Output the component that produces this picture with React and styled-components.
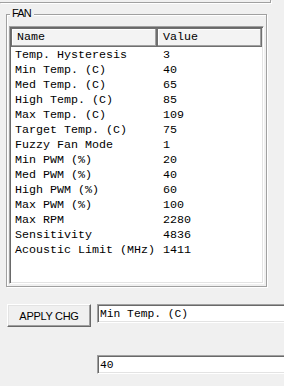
import React from 'react';
import styled, { createGlobalStyle } from 'styled-components';

const GlobalStyle = createGlobalStyle`
  html, body {
    margin: 0;
    padding: 0;
    background: #f0f0f0;
  }
  body {
    font-family: 'Liberation Sans', Arial, sans-serif;
    color: #000;
  }
`;

const Page = styled.div`
  width: 284px;
  height: 386px;
  overflow: hidden;
  background: #f0f0f0;
`;

const TopFrame = styled.div`
  width: 270px;
  height: 2px;
  box-sizing: content-box;
  border-bottom: 1px solid #a0a0a0;
  border-right: 1px solid #a0a0a0;
  box-shadow: 1px 1px 0 #fff;
`;

const GroupBox = styled.div`
  position: relative;
  box-sizing: border-box;
  width: 261px;
  height: 273px;
  margin: 11px 0 0 6px;
  padding: 11px 0 0 2px;
  border: 1px solid #a0a0a0;
  box-shadow: 1px 1px 0 #fff, inset 1px 1px 0 #fff;
`;

const Legend = styled.span`
  position: absolute;
  top: -8px;
  left: 3px;
  padding: 0 3px 0 2px;
  background: #f0f0f0;
  font-size: 11px;
  line-height: 13px;
  letter-spacing: -0.8px;
`;

const ListView = styled.div`
  box-sizing: border-box;
  width: 255px;
  height: 258px;
  background: #fff;
  border-style: solid;
  border-width: 1px;
  border-color: #a0a0a0 #fff #fff #a0a0a0;
  box-shadow: inset 1px 1px 0 #696969, inset -1px -1px 0 #e3e3e3;
  padding: 1px 1px 0 1px;
  font-family: 'Liberation Mono', 'Courier New', monospace;
  font-size: 11.67px;
  overflow: hidden;
`;

const Grid = styled.div`
  display: grid;
  grid-template-columns: 146px 1fr;
`;

const HeaderCell = styled.div`
  box-sizing: border-box;
  height: 19px;
  line-height: 16px;
  padding-left: 5px;
  background: #f3f3f3;
  border: 1px solid #6f6f6f;
  box-shadow: inset -1px -1px 0 #a0a0a0, inset 1px 1px 0 #fff;
  white-space: nowrap;
`;

const Cell = styled.div`
  height: 15px;
  line-height: 15px;
  padding-left: ${(p) => (p.$value ? '6px' : '4px')};
  white-space: nowrap;
  overflow: hidden;
`;

const FirstRowSpacer = styled.div`
  grid-column: 1 / -1;
  height: 1px;
`;

const Controls = styled.div`
  display: grid;
  grid-template-columns: 84px 200px;
  column-gap: 6px;
  row-gap: 28px;
  margin: 17px 0 0 7px;
`;

const Button = styled.button`
  box-sizing: border-box;
  width: 84px;
  height: 23px;
  padding: 0;
  background: #f0f0f0;
  border: 1px solid;
  border-color: #fff #696969 #696969 #fff;
  box-shadow: inset -1px -1px 0 #a0a0a0, inset 1px 1px 0 #e3e3e3;
  font-family: 'Liberation Sans', Arial, sans-serif;
  font-size: 11px;
  letter-spacing: -0.3px;
  color: #000;
`;

const TextBox = styled.input`
  grid-column: 2;
  box-sizing: border-box;
  width: 200px;
  height: ${(p) => p.$h}px;
  margin: 0;
  padding: 0 0 0 2px;
  background: #fff;
  border-style: solid;
  border-width: 1px;
  border-color: #a0a0a0 #fff #fff #a0a0a0;
  box-shadow: inset 1px 1px 0 #696969, inset -1px -1px 0 #e3e3e3;
  font-family: 'Liberation Mono', 'Courier New', monospace;
  font-size: 11.3px;
  color: #000;
  align-self: start;
  outline: none;
`;

const rows = [
  ['Temp. Hysteresis', '3'],
  ['Min Temp. (C)', '40'],
  ['Med Temp. (C)', '65'],
  ['High Temp. (C)', '85'],
  ['Max Temp. (C)', '109'],
  ['Target Temp. (C)', '75'],
  ['Fuzzy Fan Mode', '1'],
  ['Min PWM (%)', '20'],
  ['Med PWM (%)', '40'],
  ['High PWM (%)', '60'],
  ['Max PWM (%)', '100'],
  ['Max RPM', '2280'],
  ['Sensitivity', '4836'],
  ['Acoustic Limit (MHz)', '1411'],
];

export default function App() {
  return (
    <Page>
      <GlobalStyle />
      <TopFrame />
      <GroupBox>
        <Legend>FAN</Legend>
        <ListView>
          <Grid>
            <HeaderCell>Name</HeaderCell>
            <HeaderCell>Value</HeaderCell>
            <FirstRowSpacer />
            {rows.map(([name, value]) => (
              <React.Fragment key={name}>
                <Cell>{name}</Cell>
                <Cell $value>{value}</Cell>
              </React.Fragment>
            ))}
          </Grid>
        </ListView>
      </GroupBox>
      <Controls>
        <Button>APPLY CHG</Button>
        <TextBox $h={19} defaultValue="Min Temp. (C)" readOnly />
        <TextBox $h={19} defaultValue="40" readOnly />
      </Controls>
    </Page>
  );
}
